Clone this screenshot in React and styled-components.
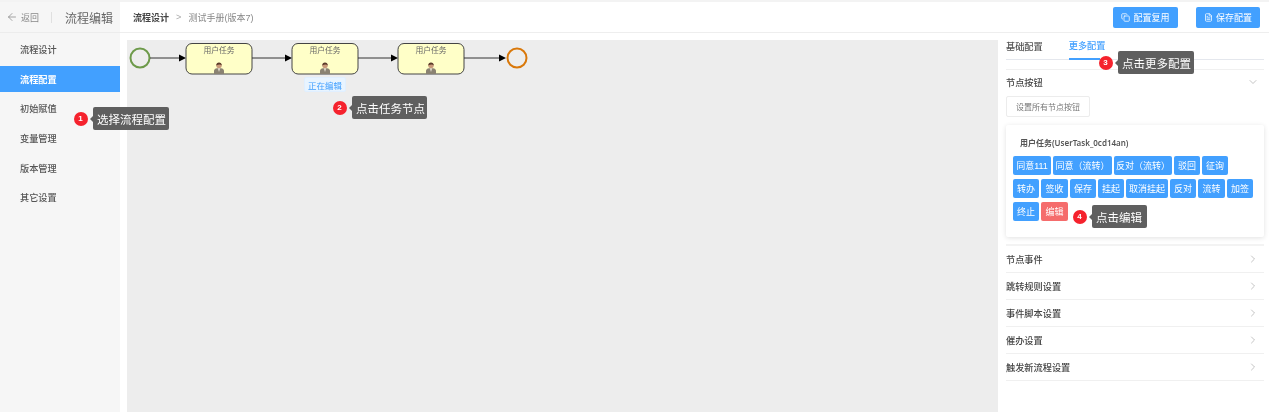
import React from 'react';
import styled, { createGlobalStyle } from 'styled-components';
import { ArrowLeft, ChevronDown, ChevronRight, Copy, FileText } from 'lucide-react';

const Global = createGlobalStyle`
  html, body { margin: 0; padding: 0; background: #fff; }
  body { font-family: "Liberation Sans", "Noto Sans CJK SC", sans-serif; }
  * { box-sizing: border-box; }
`;

const Page = styled.div`
  position: relative; width: 1269px; height: 412px; overflow: hidden;
  display: flex; background: #fff; border-top: 2px solid #f3f3f3; color: #555;
  font-size: 9.2px; filter: blur(0.35px);
`;
const Sidebar = styled.aside`
  width: 120px; flex: none; background: #f6f6f6; display: flex; flex-direction: column;
`;
const SideHead = styled.div`
  height: 31px; flex: none; display: flex; align-items: center; padding-left: 6px;
  background: #f6f6f6; border-bottom: 1px solid #ececec; margin-bottom: 1px;
`;
const Back = styled.span`
  display: flex; align-items: center; gap: 3px; color: #888; font-size: 9px;
  padding-right: 13px; margin-right: 13px; position: relative;
  &::after { content: ""; position: absolute; right: 0; top: 1px; bottom: 1px; width: 1px; background: #e0e0e0; }
`;
const SideTitle = styled.span`font-size: 12px; color: #666; white-space: nowrap;`;
const Menu = styled.nav`display: flex; flex-direction: column;`;
const MenuItem = styled.div`
  height: 29.7px; display: flex; align-items: center; padding-left: 20px; color: #555;
  font-weight: ${p => (p.$on ? 700 : 500)};
  ${p => p.$on && 'background: linear-gradient(#42a0ff,#42a0ff) 0 50%/100% 26px no-repeat; color: #fff;'}
`;
const Main = styled.div`flex: 1; display: flex; flex-direction: column; min-width: 0;`;
const TopBar = styled.header`
  height: 31px; flex: none; display: flex; align-items: center; padding: 0 9px 0 13px;
  border-bottom: 1px solid #eeeeee;
`;
const Crumb = styled.b`color: #444; font-size: 9px;`;
const Sep = styled.span`color: #aaa; margin: 0 7px 0 7px;`;
const CrumbSub = styled.span`color: #888; font-size: 9px;`;
const Actions = styled.div`margin-left: auto; display: flex; gap: 18px;`;
const PrimaryBtn = styled.button`
  height: 21px; width: ${p => p.$w}px; border: 0; border-radius: 2px; background: #42a0ff; color: #fff;
  font: inherit; font-size: 9px; display: flex; align-items: center; justify-content: center; gap: 3px; padding: 0;
`;
const Body = styled.div`flex: 1; display: flex; min-height: 0;`;
const CanvasWrap = styled.div`flex: 1; padding: 7px 0 0 7px; min-width: 0;`;
const Canvas = styled.div`position: relative; height: 100%; background: #ededed;`;
const Tag = styled.span`
  position: absolute; left: 177px; top: 37px; width: 42px; height: 15px; border-radius: 2px;
  background: #e8f4ff; border: 1px solid #e0efff; color: #42a0ff; font-size: 8.5px;
  display: flex; align-items: center; justify-content: center;
`;
const Panel = styled.section`
  width: 271px; flex: none; padding: 0 5px 0 8px; display: flex; flex-direction: column;
`;
const Tabs = styled.div`
  height: 27px; display: flex; gap: 26px; border-bottom: 1px solid #e4e7ed; margin-bottom: 9px; flex: none;
`;
const Tab = styled.div`
  height: 27px; width: ${p => (p.$on ? '31px' : 'auto')}; white-space: nowrap; display: flex; align-items: center;
  padding-bottom: 2px; font-weight: 500;
  color: ${p => (p.$on ? '#42a0ff' : '#555')};
  ${p => p.$on && 'border-bottom: 2px solid #42a0ff;'}
`;
const SectionHead = styled.div`
  height: 27px; display: flex; align-items: center; justify-content: space-between; font-weight: 500;
  color: #444; padding-right: 5px; flex: none;
  padding-bottom: ${p => (p.$open ? '2px' : '0')};
  border-top: ${p => (p.$top ? '1px solid #f0f0f0' : '0')};
  border-bottom: ${p => (p.$open ? '0' : '1px solid #f0f0f0')};
  svg { color: #888; }
`;
const OpenBody = styled.div`padding-bottom: 7px; border-bottom: 2px solid #f3f3f3; flex: none;`;
const OutlineBtn = styled.button`
  width: 84px; height: 21px; background: #fff; border: 1px solid #ececec; border-radius: 2px;
  color: #777; font: inherit; font-size: 8px; padding: 0; display: block; margin: 0 0 8px;
`;
const Card = styled.div`
  width: 258px; height: 112px; padding: 12px 7px; background: #fff;
  border-radius: 2px; box-shadow: 0 1px 5px rgba(0,0,0,.12);
`;
const CardTitle = styled.div`
  padding-left: 7px; height: 12px; line-height: 12px; color: #555; margin-bottom: 7px;
  font-family: "Noto Sans", "Noto Sans CJK SC", sans-serif; font-size: 8px; font-weight: 600;
`;
const BtnWrap = styled.div`display: flex; flex-wrap: wrap; gap: 4px 2px; width: 242px;`;
const TaskBtn = styled.span`
  height: 19px; border-radius: 2px; background: ${p => (p.$danger ? '#f56c6c' : '#42a0ff')}; color: #fff;
  font-size: 9px; display: flex; align-items: center; white-space: nowrap;
  width: ${p => p.$w}px; justify-content: center;
`;
const Hint = styled.div`
  position: absolute; left: ${p => p.$x}px; top: ${p => p.$y}px; width: ${p => p.$w}px; height: 23px;
  background: #5f5f5f; color: #fff; border-radius: 2px; font-size: 11.5px; display: flex; align-items: center; padding-left: 4px; white-space: nowrap;
  &::before { content: ""; position: absolute; left: -3px; top: 9px; border: 3px solid transparent; border-left: 0; border-right-color: #5f5f5f; }
`;
const Badge = styled.span`
  position: absolute; left: -19.5px; top: 4.5px; width: 14px; height: 14px; border-radius: 50%;
  background: #f5222d; color: #fff; font-size: 8px; font-weight: 700; display: flex; align-items: center; justify-content: center;
`;

const Person = ({ x, y }) => (
  <g transform={`translate(${x} ${y})`}>
    <path d="M-5 10 V7 Q-5 4.6 -2 4.2 H2 Q5 4.6 5 7 V10Z" fill="#8a8272" />
    <path d="M-1.2 4.2 L0 8 L1.2 4.2Z" fill="#e9e4d6" />
    <circle cx="0" cy="1.6" r="2.7" fill="#c99a7a" />
    <path d="M-2.8 1.4 Q-2.6 -1.6 0 -1.6 Q2.6 -1.6 2.8 1.4 Q1 -.2 -2.8 1.4Z" fill="#5a3a2a" />
  </g>
);

const Task = ({ x }) => (
  <g>
    <rect x={x} y="3.5" width="66" height="30.5" rx="6" fill="#ffffc8" stroke="#444" strokeWidth="1" />
    <text x={x + 33} y="13" textAnchor="middle" fontSize="7.8" fill="#666" fontFamily="'Liberation Serif','Noto Sans CJK SC',serif">用户任务</text>
    <Person x={x + 33} y={24} />
  </g>
);

const Arrow = ({ x1, x2 }) => (
  <g>
    <line x1={x1} y1="18" x2={x2 - 6} y2="18" stroke="#333" strokeWidth="1" />
    <path d={`M${x2 - 7} 14.5 L${x2} 18 L${x2 - 7} 21.5Z`} fill="#000" />
  </g>
);

const Diagram = () => (
  <svg width="420" height="60" viewBox="0 0 420 60" style={{ display: 'block' }}>
    <circle cx="13" cy="18" r="9.5" fill="#ededed" stroke="#6d9a4a" strokeWidth="2" />
    <Arrow x1={23} x2={59} />
    <Task x={59} />
    <Arrow x1={125} x2={165} />
    <Task x={165} />
    <Arrow x1={231} x2={271} />
    <Task x={271} />
    <Arrow x1={337} x2={379} />
    <circle cx="390" cy="18" r="9.5" fill="#ededed" stroke="#d9780a" strokeWidth="2" />
  </svg>
);

const buttons = [
  ['同意111', 38], ['同意（流转）', 59], ['反对（流转）', 58], ['驳回', 26], ['征询', 26],
  ['转办', 26], ['签收', 27], ['保存', 26], ['挂起', 26], ['取消挂起', 42], ['反对', 26], ['流转', 27], ['加签', 26],
  ['终止', 26],
];

const sections = ['节点事件', '跳转规则设置', '事件脚本设置', '催办设置', '触发新流程设置'];
const menu = ['流程设计', '流程配置', '初始赋值', '变量管理', '版本管理', '其它设置'];

export default function App() {
  return (
    <>
      <Global />
      <Page>
        <Sidebar>
          <SideHead>
            <Back><ArrowLeft size={12} strokeWidth={1.5} /> 返回</Back>
            <SideTitle>流程编辑</SideTitle>
          </SideHead>
          <Menu>
            {menu.map(m => <MenuItem key={m} $on={m === '流程配置'}>{m}</MenuItem>)}
          </Menu>
        </Sidebar>
        <Main>
          <TopBar>
            <Crumb>流程设计</Crumb><Sep>&gt;</Sep><CrumbSub>测试手册(版本7)</CrumbSub>
            <Actions>
              <PrimaryBtn $w={65}><Copy size={9} /> 配置复用</PrimaryBtn>
              <PrimaryBtn $w={64}><FileText size={9} /> 保存配置</PrimaryBtn>
            </Actions>
          </TopBar>
          <Body>
            <CanvasWrap>
              <Canvas>
                <Diagram />
                <Tag>正在编辑</Tag>
              </Canvas>
            </CanvasWrap>
            <Panel>
              <Tabs>
                <Tab>基础配置</Tab>
                <Tab $on>更多配置</Tab>
              </Tabs>
              <SectionHead $top $open>节点按钮 <ChevronDown size={12} strokeWidth={1} /></SectionHead>
              <OpenBody>
                <OutlineBtn>设置所有节点按钮</OutlineBtn>
                <Card>
                  <CardTitle>用户任务(UserTask_0cd14an)</CardTitle>
                  <BtnWrap>
                    {buttons.map(([t, w]) => <TaskBtn key={t} $w={w}>{t}</TaskBtn>)}
                    <TaskBtn $danger $w={27}>编辑</TaskBtn>
                  </BtnWrap>
                </Card>
              </OpenBody>
              {sections.map(s => <SectionHead key={s}>{s} <ChevronRight size={12} strokeWidth={1} /></SectionHead>)}
            </Panel>
          </Body>
        </Main>
        <Hint $x={93} $y={105} $w={76}><Badge>1</Badge>选择流程配置</Hint>
        <Hint $x={352} $y={94} $w={75}><Badge>2</Badge>点击任务节点</Hint>
        <Hint $x={1118} $y={49} $w={76}><Badge>3</Badge>点击更多配置</Hint>
        <Hint $x={1092} $y={203} $w={55}><Badge>4</Badge>点击编辑</Hint>
      </Page>
    </>
  );
}
